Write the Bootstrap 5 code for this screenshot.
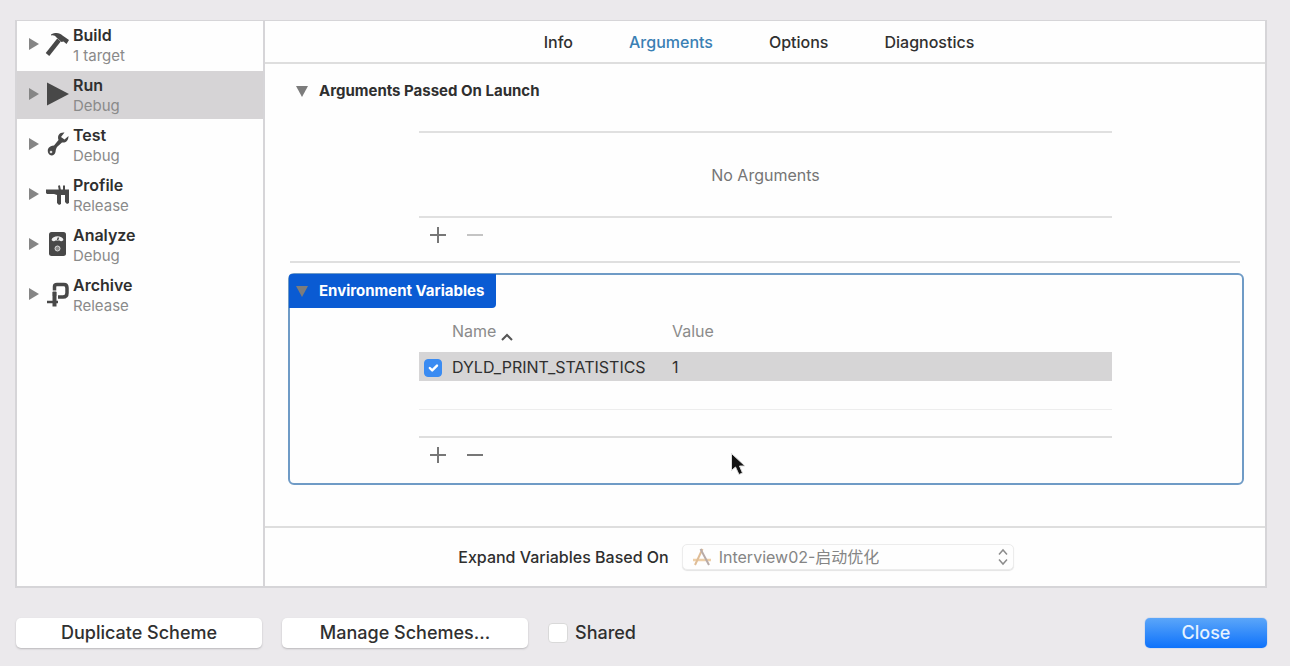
<!DOCTYPE html>
<html lang="en">
<head>
<meta charset="utf-8">
<meta name="viewport" content="width=device-width, initial-scale=1">
<title>Edit Scheme</title>
<link href="https://cdn.jsdelivr.net/npm/bootstrap@5.3.0/dist/css/bootstrap.min.css" rel="stylesheet">
<style>
  body { background: #ebe9ec; color: #2f2f2f; font-family: Inter, "Noto Sans CJK SC", sans-serif; font-size: 16px; line-height: 20px; }
  .sheet { padding: 20px 23px 18px 15px; gap: 30px; }
  .scheme-panel { background: #fefefe; border: 2px solid #d6d5d8; border-top-width: 1px; }
  .phases { width: 248px; border-right: 2px solid #d6d5d8; }
  .phase { height: 50px; padding: 0 0 0 11px; color: #2f2f2f; text-decoration: none; border-bottom: 2px solid #fefefe; }
  .phase.active { background: #d6d4d6; }
  .phase .tri { width: 12px; height: 14px; margin-bottom: 2px; fill: #858585; }
  .phase .glyph { width: 24px; height: 26px; margin: 0 4px 2px 5px; color: #484848; }
  .phase-name { font-weight: 600; line-height: 22px; }
  .phase-sub { font-size: 15px; line-height: 20px; color: #8a8a8a; }
  .tabs { gap: 56px; height: 43px; padding-right: 12px; border-bottom: 2px solid #dedede; font-weight: 500; }
  .tabs a { color: #303030; text-decoration: none; }
  .tabs a.active { color: #3a80b4; }
  .sections { padding: 10px 21px 0 23px; }
  .section-head { height: 34px; gap: 11px; padding: 0 12px 0 8px; border: 0; background: none; font-size: 15px; font-weight: 700; color: #2f2f2f; }
  .section-head svg { width: 12px; height: 12px; fill: #7c7c7c; }
  .inset-list { margin: 0 132px 0 131px; }
  .list-frame { border-top: 2px solid #e0e0e0; border-bottom: 2px solid #e0e0e0; }
  .empty-list { height: 87px; margin-top: 23px; color: #757575; }
  .tool-row { height: 34px; padding-left: 10px; gap: 19px; }
  .tool { width: 18px; height: 18px; padding: 0; border: 0; background: none; color: #777; display: flex; }
  .tool:disabled { color: #c4c4c4; }
  .rule { height: 2px; background: #dfdfdf; margin: 9px 4px 10px 2px; }
  .env { border: 2px solid #6f9bc6; border-radius: 6px; padding-bottom: 11px; }
  .env .section-head { background: #0a5bd3; color: #fff; border-radius: 3px 0 4px 0; margin: -1px 0 0 -1px; padding: 0 12px 0 7px; }
  .env .inset-list { margin: 0 130px 0 129px; }
  .vars { width: 100%; table-layout: fixed; margin-top: 10px; border-bottom: 2px solid #dedede; }
  .vars th { font-weight: 400; color: #8b8b8b; height: 34px; padding: 0 0 8px; }
  .vars th svg { vertical-align: -4px; }
  .vars td { height: 29px; padding: 0; }
  .vars .picked { background: #d6d5d6; }
  .vars .blank td { height: 28px; border-bottom: 1px solid #ededed; }
  .vars .blank:last-child td { border-bottom: 0; }
  .col-tick { width: 33px; }
  .col-name { width: 220px; }
  .form-check-input.tick { width: 18px; height: 18px; margin: 2px 0 0 5px; border-radius: 4px; float: none; display: block; border-color: #d9d9d9; box-shadow: none; }
  .form-check-input.tick:checked { background-color: #3a8bf2; border-color: #3a8bf2; }
  .pointer { position: absolute; left: 440px; top: 177px; width: 18px; height: 26px; }
  .expand { height: 60px; gap: 13px; border-top: 2px solid #dedede; padding-right: 58px; }
  .expand label { font-weight: 500; }
  .target { width: 332px; }
  .target select { width: 100%; height: 26px; padding: 0 30px 0 36px; border: 1px solid #ececec; border-radius: 5px; background: #fefefe; color: #858585; font-size: 16px; line-height: 20px; appearance: none; opacity: 1; box-shadow: 0 1px 1px #e4e4e4; }
  .target svg { position: absolute; pointer-events: none; }
  .app-glyph { left: 10px; top: 3px; width: 20px; height: 20px; }
  .updown { right: 5px; top: 4px; width: 12px; height: 18px; }
  .actions { gap: 20px; padding-left: 1px; font-size: 18px; font-weight: 500; }
  .mac-btn { width: 246px; height: 30px; padding: 0; border: 0; border-radius: 5px; background: #fff; color: #303030; font-weight: 500; line-height: 26px; box-shadow: 0 1px 2px #b9b7ba; }
  .mac-btn.primary { width: 122px; color: #e6f2ff; background: linear-gradient(#5ba6f9, #0e72fb); box-shadow: 0 0 1px #2a7df0; }
  .shared { gap: 7px; }
  .form-check-input.tick.big { width: 20px; height: 20px; margin: 0; }
</style>
</head>
<body>
<div class="sheet d-flex flex-column min-vh-100">
  <main class="scheme-panel d-flex flex-grow-1">
    <nav class="phases flex-shrink-0" aria-label="Scheme actions">
      <a class="phase d-flex align-items-center" href="#">
        <svg class="tri" viewBox="0 0 12 14"><path d="M1 1l10 6-10 6z"/></svg>
        <svg class="glyph" viewBox="0 0 24 26"><path d="M2.500 23.500 14 9" stroke="currentColor" stroke-width="4.500" fill="none"/><path d="M6 3.500C11 1 15 2 17.500 4.500L24 9l-2.500 4-3-2.500-2 .5-5-4.500C10 4.500 8.500 4 6 4.500z" fill="currentColor"/></svg>
        <span><span class="phase-name d-block">Build</span><span class="phase-sub d-block">1 target</span></span>
      </a>
      <a class="phase active d-flex align-items-center" href="#" aria-current="page">
        <svg class="tri" viewBox="0 0 12 14"><path d="M1 1l10 6-10 6z"/></svg>
        <svg class="glyph" viewBox="0 0 24 26"><path d="M2 1.500 24 13 2 24.500z" fill="currentColor"/></svg>
        <span><span class="phase-name d-block">Run</span><span class="phase-sub d-block">Debug</span></span>
      </a>
      <a class="phase d-flex align-items-center" href="#">
        <svg class="tri" viewBox="0 0 12 14"><path d="M1 1l10 6-10 6z"/></svg>
        <svg class="glyph" viewBox="0 0 24 26"><path d="M19.500 1.500c-5-.5-7.500 3-6 7.500L9 14.500c-5 .5-7 3-6 7 1.500 4 6.500 4 7.500-.5.3-2 .5-3.500 1.500-5l5-4.500c3.500.5 6.500-1.500 6.500-6.500l-4 3.500-3.500-2.500z" fill="currentColor"/><circle cx="6" cy="21" r="1.300" fill="#ddd"/></svg>
        <span><span class="phase-name d-block">Test</span><span class="phase-sub d-block">Debug</span></span>
      </a>
      <a class="phase d-flex align-items-center" href="#">
        <svg class="tri" viewBox="0 0 12 14"><path d="M1 1l10 6-10 6z"/></svg>
        <svg class="glyph" viewBox="0 0 24 26"><path d="M1 8.500h23v6V22l-2 1-2-2v-7h-4v9l-2 1-2-2v-8l-3-1H2l-1-1z" fill="currentColor"/><path d="M15 10 14 4.500M19 10V4.500" stroke="currentColor" stroke-width="2"/></svg>
        <span><span class="phase-name d-block">Profile</span><span class="phase-sub d-block">Release</span></span>
      </a>
      <a class="phase d-flex align-items-center" href="#">
        <svg class="tri" viewBox="0 0 12 14"><path d="M1 1l10 6-10 6z"/></svg>
        <svg class="glyph" viewBox="0 0 24 26"><rect x="4" y="1" width="17" height="24" rx="2.500" fill="currentColor"/><path d="M6.500 9c1-5 11-5 12 0-1.500 1.500-3 1.500-4 .5h-4c-1 1-2.500 1-4-.5z" fill="#f0f0f0"/><path d="m12.500 9 1-2.500" stroke="#484848" stroke-width="1.500"/><circle cx="12.500" cy="17.500" r="2.500" fill="#8a8a8a" stroke="#ddd" stroke-width="1"/></svg>
        <span><span class="phase-name d-block">Analyze</span><span class="phase-sub d-block">Debug</span></span>
      </a>
      <a class="phase d-flex align-items-center" href="#">
        <svg class="tri" viewBox="0 0 12 14"><path d="M1 1l10 6-10 6z"/></svg>
        <svg class="glyph" viewBox="0 0 24 26"><path d="M9.500 15V5.500Q9.500 3.500 12 3.500h7Q22 3.500 22 7v5Q22 16 18 16h-5" fill="none" stroke="currentColor" stroke-width="3.500"/><path d="M9.500 11v14.500" stroke="currentColor" stroke-width="4"/><path d="M2 21h11" stroke="currentColor" stroke-width="2.500"/><path d="M6 10h7" stroke="#fefefe" stroke-width="1"/></svg>
        <span><span class="phase-name d-block">Archive</span><span class="phase-sub d-block">Release</span></span>
      </a>
    </nav>

    <div class="d-flex flex-column flex-grow-1">
      <nav class="tabs d-flex justify-content-center align-items-center" aria-label="Run settings">
        <a href="#">Info</a>
        <a href="#" class="active" aria-current="page">Arguments</a>
        <a href="#">Options</a>
        <a href="#">Diagnostics</a>
      </nav>

      <div class="sections flex-grow-1">
        <section>
          <button type="button" class="section-head d-flex align-items-center" aria-expanded="true">
            <svg viewBox="0 0 12 12"><path d="M0 1h12L6 12z"/></svg>Arguments Passed On Launch
          </button>
          <div class="inset-list">
            <div class="list-frame empty-list d-flex align-items-center justify-content-center">No Arguments</div>
            <div class="tool-row d-flex align-items-center">
              <button type="button" class="tool" aria-label="Add argument"><svg viewBox="0 0 18 18"><path d="M1 9h16M9 1v16" stroke="currentColor" stroke-width="2"/></svg></button>
              <button type="button" class="tool" aria-label="Remove argument" disabled><svg viewBox="0 0 18 18"><path d="M1 9h16" stroke="currentColor" stroke-width="2"/></svg></button>
            </div>
          </div>
        </section>

        <div class="rule"></div>

        <section class="env position-relative">
          <button type="button" class="section-head d-flex align-items-center" aria-expanded="true">
            <svg viewBox="0 0 12 12"><path d="M0 1h12L6 12z"/></svg>Environment Variables
          </button>
          <div class="inset-list">
            <table class="vars">
              <colgroup><col class="col-tick"><col class="col-name"><col></colgroup>
              <thead>
                <tr><th></th><th>Name <svg width="12" height="8" viewBox="0 0 12 8"><path d="M1 7l5-5 5 5" fill="none" stroke="#555" stroke-width="2"/></svg></th><th>Value</th></tr>
              </thead>
              <tbody>
                <tr class="picked">
                  <td><input class="form-check-input tick" type="checkbox" id="var1" checked></td>
                  <td><label for="var1">DYLD_PRINT_STATISTICS</label></td>
                  <td>1</td>
                </tr>
                <tr class="blank"><td></td><td></td><td></td></tr>
                <tr class="blank"><td></td><td></td><td></td></tr>
              </tbody>
            </table>
            <div class="tool-row d-flex align-items-center">
              <button type="button" class="tool" aria-label="Add variable"><svg viewBox="0 0 18 18"><path d="M1 9h16M9 1v16" stroke="currentColor" stroke-width="2"/></svg></button>
              <button type="button" class="tool" aria-label="Remove variable"><svg viewBox="0 0 18 18"><path d="M1 9h16" stroke="currentColor" stroke-width="2"/></svg></button>
            </div>
          </div>
          <svg class="pointer" viewBox="0 0 18 26"><path d="M1.500 1.500v17l4-3.500 3.500 7.500 3.500-1.500-3-7h5.500z" fill="#111" stroke="#ddd" stroke-width="1"/></svg>
        </section>
      </div>

      <div class="expand d-flex align-items-center justify-content-center">
        <label for="target">Expand Variables Based On</label>
        <div class="target position-relative">
          <select id="target" disabled><option>Interview02-启动优化</option></select>
          <svg class="app-glyph" viewBox="0 0 20 20" fill="none"><path d="M1 13h18" stroke="#edcfa8" stroke-width="2.500"/><path d="M10.500 2 3 18" stroke="#dfbd97" stroke-width="2"/><path d="M8.500 2 17 18" stroke="#b8aba8" stroke-width="2"/></svg>
          <svg class="updown" viewBox="0 0 12 18"><path d="M2 6.500 6 2l4 4.500M2 11.500 6 16l4-4.500" fill="none" stroke="#8c8c8c" stroke-width="1.500"/></svg>
        </div>
      </div>
    </div>
  </main>

  <footer class="actions d-flex align-items-center">
    <button type="button" class="mac-btn">Duplicate Scheme</button>
    <button type="button" class="mac-btn">Manage Schemes...</button>
    <div class="shared d-flex align-items-center">
      <input class="form-check-input tick big" type="checkbox" id="shared"><label for="shared">Shared</label>
    </div>
    <button type="button" class="mac-btn primary ms-auto">Close</button>
  </footer>
</div>
<script src="https://cdn.jsdelivr.net/npm/bootstrap@5.3.0/dist/js/bootstrap.bundle.min.js"></script>
</body>
</html>
